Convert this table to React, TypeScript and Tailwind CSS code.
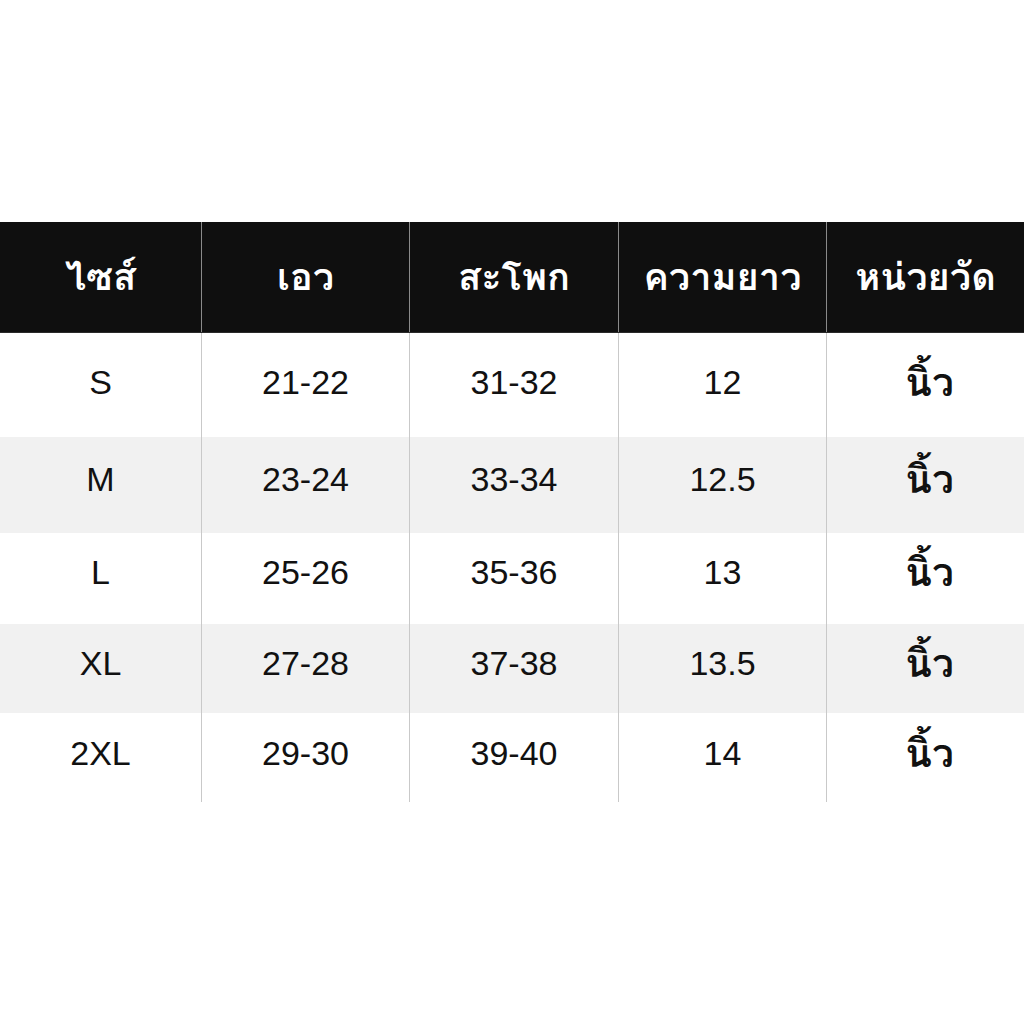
import React from 'react';

const headers = ['ไซส์', 'เอว', 'สะโพก', 'ความยาว', 'หน่วยวัด'];

const rows = [
  { size: 'S', waist: '21-22', hip: '31-32', len: '12', h: 'h-[104px]', bg: 'bg-white', pad: 'pb-[6px]' },
  { size: 'M', waist: '23-24', hip: '33-34', len: '12.5', h: 'h-[96px]', bg: 'bg-[#f1f1f1]', pad: 'pb-[12px]' },
  { size: 'L', waist: '25-26', hip: '35-36', len: '13', h: 'h-[91px]', bg: 'bg-white', pad: 'pb-[12px]' },
  { size: 'XL', waist: '27-28', hip: '37-38', len: '13.5', h: 'h-[89px]', bg: 'bg-[#f1f1f1]', pad: 'pb-[10px]' },
  { size: '2XL', waist: '29-30', hip: '39-40', len: '14', h: 'h-[89px]', bg: 'bg-white', pad: 'pb-[8px]' },
];

const cols = 'grid grid-cols-[201px_208px_209px_208px_198px]';
const thai = "font-['Tahoma','Loma','Garuda','Waree','Noto_Sans_Thai_Looped','Noto_Sans_Thai',sans-serif]";

export default function App() {
  return (
    <div className="w-[1024px] h-[1024px] bg-white pt-[222px] font-['Liberation_Sans','Tahoma','Loma','Garuda','Noto_Sans_Thai',sans-serif]">
      {/* header */}
      <div className={`${cols} h-[111px] bg-[#0f0f0f] border-b border-[#2a2a2a] text-white`}>
        {headers.map((t, i) => (
          <div
            key={t}
            className={`flex items-center justify-center text-[38px] font-semibold pb-[2px] ${thai} ${i > 0 ? 'border-l border-[#8a8a8a]' : ''}`}
          >
            {t}
          </div>
        ))}
      </div>

      {/* body */}
      {rows.map((r) => (
        <div key={r.size} className={`${cols} ${r.h} ${r.bg} text-[34px] text-[#111]`}>
          <div className={`flex items-center justify-center ${r.pad}`}>{r.size}</div>
          <div className={`flex items-center justify-center border-l border-[#c9c9c9] ${r.pad}`}>{r.waist}</div>
          <div className={`flex items-center justify-center border-l border-[#c9c9c9] ${r.pad}`}>{r.hip}</div>
          <div className={`flex items-center justify-center border-l border-[#c9c9c9] ${r.pad}`}>{r.len}</div>
          <div className={`flex items-center justify-center border-l border-[#c9c9c9] text-[39px] font-semibold pl-[8px] ${thai} ${r.pad}`}>
            นิ้ว
          </div>
        </div>
      ))}
    </div>
  );
}
